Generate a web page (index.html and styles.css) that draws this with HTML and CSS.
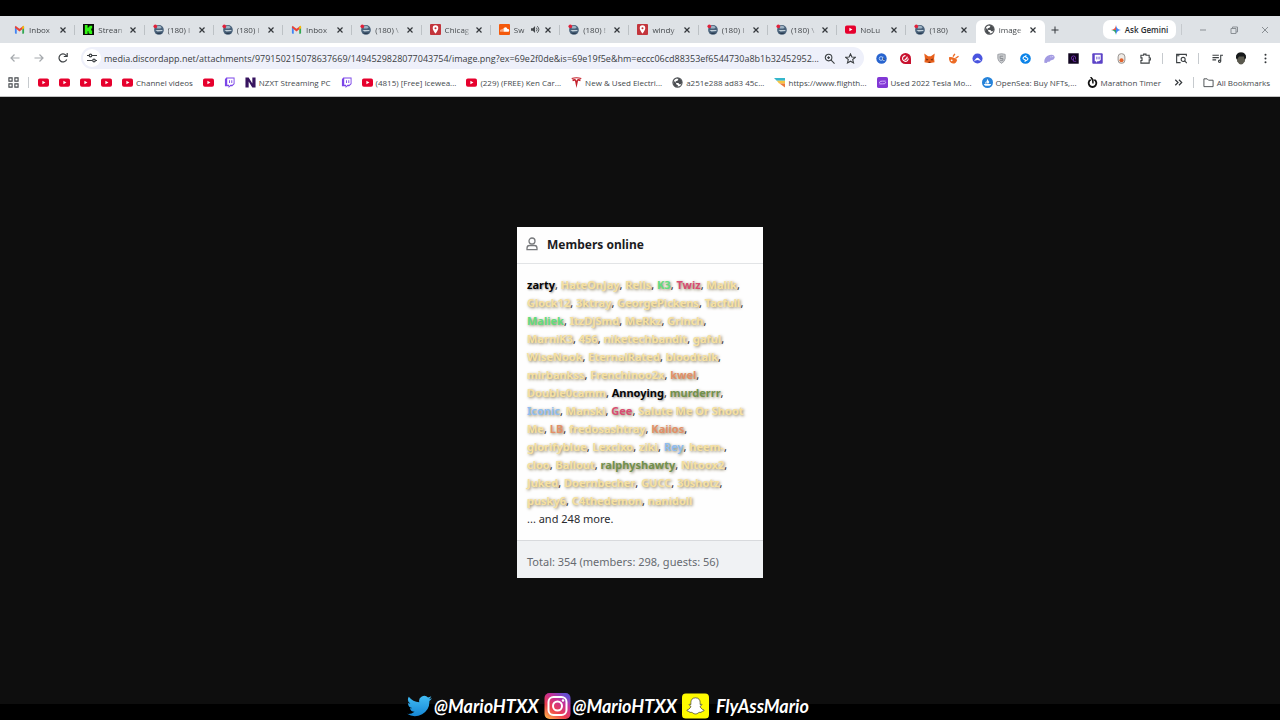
FILE: index.html
```
<!DOCTYPE html>
<html lang="en">
<head>
    <meta charset="UTF-8">
    <meta name="viewport" content="width=device-width, initial-scale=1.0">
    <title>image.png</title>
    <link rel="stylesheet" href="styles.css">
</head>
<body>
    <svg class="sprite" aria-hidden="true">
        <symbol id="gmail" viewBox="0 0 12 12"><path fill="#4285f4" d="M1 3h2v7.500H1.800a.8.8 0 0 1-.8-.8z"/><path fill="#34a853" d="M9 3h2v6.700a.8.8 0 0 1-.8.8H9z"/><path fill="#ea4335" d="M1.500 1.800L6 5.300l4.500-3.500.5 2.400-5 3.900-5-3.900z"/><path fill="#fbbc04" d="M9 3.200l1.200-1.200q.8 0 .8 1v1.500L9 6z"/></symbol>
        <symbol id="kick" viewBox="0 0 12 12"><path fill="#0a0a0a" d="M0 0h12v12H0z"/><path fill="#32f516" d="M2 1h3v3h1V3h1V2h3v3H9v2h1v4H7v-1H6V8H5v3H2z"/></symbol>
        <symbol id="forum" viewBox="0 0 12 12"><circle cx="6.500" cy="6.500" r="5.300" fill="#49617a"/><path fill="#9db3c4" d="M4 2.500q3-1.500 5.500 1L8 5H4z"/><path fill="#c3d0d9" d="M2.500 6.500h8l-.5 1-5 .8z"/><path fill="#27394e" d="M3 9.500h7q-3.500 3-7 0z"/><circle cx="2.500" cy="2.500" r="2" fill="#e0213b"/></symbol>
        <symbol id="pin" viewBox="0 0 12 12"><rect width="12" height="12" rx="1" fill="#c3353c"/><path fill="#fff" fill-rule="evenodd" d="M6 1.500a3 3 0 0 1 3 3.200C9 6.800 6 10.500 6 10.500S3 6.800 3 4.700a3 3 0 0 1 3-3.200zm0 2a1.100 1.100 0 1 0 0 2.200 1.100 1.100 0 0 0 0-2.200z"/></symbol>
        <symbol id="cloud" viewBox="0 0 12 12"><rect width="12" height="12" rx="1" fill="#f4590b"/><path fill="#fff" d="M5.500 8.500V4q3-1.500 3.700 1.500 2-.2 2 1.500t-1.600 1.500zM4.300 4.500h.7v4h-.7zM3 5.500h.7v3H3zM1.700 6.300h.7v2.200h-.7z"/></symbol>
        <symbol id="youtube" viewBox="0 0 12 12"><rect y="1.500" width="12" height="9" rx="2" fill="#e6002d"/><path fill="#fff" d="M4.800 4v4l3.300-2z"/></symbol>
        <symbol id="globe" viewBox="0 0 12 12"><circle cx="6" cy="6" r="5" fill="#fff" stroke="#4b4e52" stroke-width="1.200"/><path fill="#4b4e52" d="M1.500 4l3 2v2l2 1-.5 2Q2 10.500 1.500 7zM5 1.200l2 1-1 2-2 .3v2L7 6.500l1 1.500h2l1-2Q10.500 1.500 6.500 1z"/></symbol>
        <symbol id="twitch" viewBox="0 0 12 12"><path fill="#7b45e8" d="M2.500.5h9v7L9 10H7l-2 2v-2H1V2.500z"/><path fill="#fff" d="M3.500 1.500h7v5.500L9 8.500H7L5.500 10V8.500h-2z"/><path fill="#7b45e8" d="M5.500 3.500h1v3h-1zm2.500 0h1v3H8z"/></symbol>
        <symbol id="nzxt" viewBox="0 0 12 12"><path fill="#36135f" d="M.5.500H4L8 7V.500h3.500v11H8L4 5v6.500H.500z"/></symbol>
        <symbol id="tesla" viewBox="0 0 12 12"><path fill="#c3202b" d="M.5 1Q6-.5 11.500 1L11 2.200Q6 .7 1 2.200zM1.300 2.800Q3 2.100 5 2.400L6 4l1-1.600q2-.3 3.700.4L10 4.500Q8.500 4 7.700 4.200L6 12 4.300 4.200Q3.500 4 2 4.500z"/></symbol>
        <symbol id="flight" viewBox="0 0 12 12"><path fill="#35b6cb" d="M0 1h12v3H3z"/><path fill="#f6c544" d="M3 4h9v3H5.500z"/><path fill="#ec7a3c" d="M6 7h6v4.500z"/></symbol>
        <symbol id="recharge" viewBox="0 0 12 12"><rect width="12" height="12" rx="2" fill="#8238d5"/><path fill="none" stroke="#d9b9ff" d="M2.500 6.500Q3 4 6 4.500h3.500M2.500 7.500H6q3.500.5 3.700-2"/></symbol>
        <symbol id="opensea" viewBox="0 0 12 12"><circle cx="6" cy="6" r="6" fill="#2683da"/><path fill="#fff" d="M5.500 2l2.500 3.500L7 7H5.500zM5 3.500V7H3.200zM2 7.700h8Q9.500 9.500 8 9.500H4Q2.500 9.500 2 7.700z"/></symbol>
        <symbol id="timer" viewBox="0 0 12 12"><path fill="none" stroke="#111" stroke-width="2" d="M4 3a4.200 4.200 0 1 0 4 0"/><path stroke="#111" stroke-width="1.500" d="M4 0l2.500 3v4"/></symbol>
        <symbol id="close" viewBox="0 0 8 8"><path stroke="#33373b" stroke-width="1.200" d="M1.500 1.500l5 5m0-5l-5 5"/></symbol>
    </svg>

    <header class="browser">
        <div class="tabstrip">
            <div class="tabs">
                <div class="tab"><svg class="icon"><use href="#gmail"/></svg><span class="tab-title">Inbox</span><button class="tab-close" aria-label="Close tab"><svg><use href="#close"/></svg></button></div>
                <div class="tab"><svg class="icon"><use href="#kick"/></svg><span class="tab-title">Strean</span><button class="tab-close" aria-label="Close tab"><svg><use href="#close"/></svg></button></div>
                <div class="tab"><svg class="icon"><use href="#forum"/></svg><span class="tab-title">(180) I</span><button class="tab-close" aria-label="Close tab"><svg><use href="#close"/></svg></button></div>
                <div class="tab"><svg class="icon"><use href="#forum"/></svg><span class="tab-title">(180) I</span><button class="tab-close" aria-label="Close tab"><svg><use href="#close"/></svg></button></div>
                <div class="tab"><svg class="icon"><use href="#gmail"/></svg><span class="tab-title">Inbox</span><button class="tab-close" aria-label="Close tab"><svg><use href="#close"/></svg></button></div>
                <div class="tab"><svg class="icon"><use href="#forum"/></svg><span class="tab-title">(180) \</span><button class="tab-close" aria-label="Close tab"><svg><use href="#close"/></svg></button></div>
                <div class="tab"><svg class="icon"><use href="#pin"/></svg><span class="tab-title">Chicag</span><button class="tab-close" aria-label="Close tab"><svg><use href="#close"/></svg></button></div>
                <div class="tab">
                    <svg class="icon"><use href="#cloud"/></svg><span class="tab-title">Sw</span>
                    <svg class="sound" viewBox="0 0 10 10"><path fill="#44484c" d="M0 3.500h2L4.500 1v8L2 6.500H0z"/><path fill="none" stroke="#44484c" d="M6 3q1.500 2 0 4M7 1.300q3.500 3.700 0 7.400"/></svg>
                    <button class="tab-close" aria-label="Close tab"><svg><use href="#close"/></svg></button>
                </div>
                <div class="tab"><svg class="icon"><use href="#forum"/></svg><span class="tab-title">(180) !</span><button class="tab-close" aria-label="Close tab"><svg><use href="#close"/></svg></button></div>
                <div class="tab"><svg class="icon"><use href="#pin"/></svg><span class="tab-title">windy</span><button class="tab-close" aria-label="Close tab"><svg><use href="#close"/></svg></button></div>
                <div class="tab"><svg class="icon"><use href="#forum"/></svg><span class="tab-title">(180) I</span><button class="tab-close" aria-label="Close tab"><svg><use href="#close"/></svg></button></div>
                <div class="tab"><svg class="icon"><use href="#forum"/></svg><span class="tab-title">(180) \</span><button class="tab-close" aria-label="Close tab"><svg><use href="#close"/></svg></button></div>
                <div class="tab"><svg class="icon"><use href="#youtube"/></svg><span class="tab-title">NoLu</span><button class="tab-close" aria-label="Close tab"><svg><use href="#close"/></svg></button></div>
                <div class="tab"><svg class="icon"><use href="#forum"/></svg><span class="tab-title">(180)</span><button class="tab-close" aria-label="Close tab"><svg><use href="#close"/></svg></button></div>
                <div class="tab active"><svg class="icon"><use href="#globe"/></svg><span class="tab-title">image</span><button class="tab-close" aria-label="Close tab"><svg><use href="#close"/></svg></button></div>
            </div>
            <button class="new-tab" aria-label="New tab"><svg viewBox="0 0 8 8"><path stroke="#33373b" d="M4 .5v7M.5 4h7"/></svg></button>
            <button class="gemini">
                <svg viewBox="0 0 10 10"><path fill="#4285f4" d="M5 0q.5 4.500 5 5-4.500.5-5 5z"/><path fill="#34a06a" d="M5 10Q4.500 5.500 0 5h5z"/><path fill="#e5574a" d="M5 0Q4.500 4.500 0 5h5z"/></svg>
                Ask Gemini
            </button>
            <span class="divider"></span>
            <div class="window-buttons">
                <button aria-label="Minimize"><svg viewBox="0 0 8 8"><path d="M1 4h6"/></svg></button>
                <button aria-label="Restore"><svg viewBox="0 0 8 8"><path d="M1 2.500h5v5H1zM2.500 2.500V1H7.500v5H6"/></svg></button>
                <button aria-label="Close"><svg viewBox="0 0 8 8"><path d="M1 1l6 6m0-6L1 7"/></svg></button>
            </div>
        </div>

        <div class="toolbar">
            <button class="tool disabled" aria-label="Back"><svg viewBox="0 0 12 12"><path d="M10.500 6h-8.500m3.500-3.500L2 6l3.500 3.500"/></svg></button>
            <button class="tool disabled" aria-label="Forward"><svg viewBox="0 0 12 12"><path d="M1.500 6H10M6.500 2.500L10 6 6.500 9.500"/></svg></button>
            <button class="tool" aria-label="Reload"><svg viewBox="0 0 12 12"><path d="M9.700 7.500A4 4 0 1 1 9 3.300l1 1M10.200 1v3.500H6.800"/></svg></button>
            <div class="omnibox">
                <button class="site-info" aria-label="Site information"><svg viewBox="0 0 12 12"><path d="M1 3.500h2M6 3.500h5M1 8.500h5M9.500 8.500H11"/><circle cx="4.500" cy="3.500" r="1.300"/><circle cx="8" cy="8.500" r="1.300"/></svg></button>
                <input class="url" type="text" aria-label="Address" value="media.discordapp.net/attachments/979150215078637669/1494529828077043754/image.png?ex=69e2f0de&amp;is=69e19f5e&amp;hm=eccc06cd88353ef6544730a8b1b32452952...">
                <button class="tool small" aria-label="Zoom"><svg viewBox="0 0 12 12"><circle cx="5" cy="5" r="3.600"/><path d="M7.500 7.500L11.500 11.500M3.500 5h3M5 3.500v3"/></svg></button>
                <button class="tool small" aria-label="Bookmark this tab"><svg viewBox="0 0 12 12"><path d="M6 1l1.500 3.400 3.700.3-2.800 2.400.9 3.700L6 8.900l-3.300 1.900.9-3.700L.8 4.700l3.700-.3z"/></svg></button>
            </div>
            <div class="extensions">
                <button class="ext" aria-label="Extension"><svg viewBox="0 0 12 12"><circle cx="6" cy="6" r="5.700" fill="#2864cf"/><circle cx="5.500" cy="6" r="2" fill="none" stroke="#b8d5ff"/><path stroke="#b8d5ff" d="M7.500 4v4h2"/></svg></button>
                <button class="ext" aria-label="Extension"><svg viewBox="0 0 12 12"><path fill="#c8102e" d="M6 0a6 6 0 0 1 6 6v6H6A6 6 0 0 1 6 0z"/><path fill="none" stroke="#fff" stroke-width="1.200" d="M9 6A3.100 3.100 0 1 1 6 2.900M5 7.200Q7.500 7 8 4"/></svg></button>
                <button class="ext" aria-label="Extension"><svg viewBox="0 0 12 12"><path fill="#e8601c" d="M.3.500L4.500 3.500h3L11.700.500 11 6l.5 4-3 .5L7.500 11h-3l-1-.5-3-.5L1 6z"/><path fill="#6f2f17" d="M2 6l3 1-2 1.500zM10 6L7 7l2 1.500zM5 9.500h2v1.500H5z"/></svg></button>
                <button class="ext" aria-label="Extension"><svg viewBox="0 0 12 12"><path fill="#ec6b25" d="M1 4.500Q4 4 7 5.500t3 2Q9 11.500 5.500 11.500 1 11 1 4.500z"/><path stroke="#ec6b25" stroke-width="1.500" d="M5.500 4l2-3M8 6l3.500-2.500"/><circle cx="4" cy="8" r="1" fill="#fff"/></svg></button>
                <button class="ext" aria-label="Extension"><svg viewBox="0 0 12 12"><circle cx="6" cy="6" r="5.500" fill="#4a55df"/><path fill="#fff" d="M1.800 9.200L4.200 6.300q1.800-2 3.600 0l2.400 2.900Q8.500 7.500 6 7.500T1.800 9.200z"/></svg></button>
                <button class="ext" aria-label="Extension"><svg viewBox="0 0 12 12"><path fill="#c9cbce" stroke="#999da2" d="M2 1.500L6 .8l4 .7v4.500Q9.500 9.500 6 11.300 2.500 9.500 2 6z"/><path fill="none" stroke="#85898e" d="M7.800 3.500H4.500V6h3v2h-3"/></svg></button>
                <button class="ext" aria-label="Extension"><svg viewBox="0 0 12 12"><circle cx="6" cy="6" r="5.800" fill="#0b83e8"/><path fill="none" stroke="#fff" stroke-width="1.200" d="M7 2.800L4 4.500q-1.300 1.300 0 2.200L6.200 8M5 9.200l3-1.700q1.300-1.300 0-2.200L5.800 4"/></svg></button>
                <button class="ext" aria-label="Extension"><svg viewBox="0 0 12 12"><path fill="#a39be2" d="M.3 10.500Q0 4 6 2.300q5.500-1.300 5.700 3-.7 2.700-4.200 2.500L6 9.500H4l-1 1.500z"/><path stroke="#eeeaff" d="M7.500 3.800v1M9.500 3.500v1"/></svg></button>
                <button class="ext" aria-label="Extension"><svg viewBox="0 0 12 12"><path fill="#10051f" d="M.3.300h11.400v11.400H.300z"/><circle cx="6" cy="5.500" r="2.300" fill="none" stroke="#7132af"/><path stroke="#7132af" d="M6 5v4h3"/></svg></button>
                <button class="ext" aria-label="Extension"><svg viewBox="0 0 12 12"><rect x=".3" y=".3" width="11.400" height="11.400" rx="1" fill="#5b42c7"/><path fill="#fff" d="M3 2h6.500v5.500L7.500 9H6l-1.500 1.500V9H3z"/><path stroke="#5b42c7" d="M5.300 4v3M7.700 4v3"/></svg></button>
                <button class="ext" aria-label="Extension"><svg viewBox="0 0 12 12"><rect x="2.300" y=".7" width="7.400" height="10.600" rx="3.500" fill="#eeeae5" stroke="#8e8985"/><circle cx="6" cy="7.800" r="2.200" fill="#e2622c"/></svg></button>
                <button class="ext" aria-label="Extensions"><svg class="line" viewBox="0 0 12 12"><path d="M1 2.500h3V1.200h2.500v1.300h3.500V5.500h1.300v2H10v3.500H1V8.200h1.200V5.300H1z"/></svg></button>
                <span class="divider"></span>
                <button class="ext" aria-label="Tab search"><svg class="line" viewBox="0 0 12 12"><path d="M5 10.500H.7V1.500h10.600v2M.7 3h3"/><circle cx="7.800" cy="7" r="2.200"/><path d="M9.500 8.700l2.300 2.300"/></svg></button>
                <span class="divider"></span>
                <button class="ext" aria-label="Media controls"><svg class="line" viewBox="0 0 12 12"><path d="M.5 2.500h7M.5 5h7M.5 7.500h4M9.500 9V2.500H12"/><circle cx="8.300" cy="9" r="1.200"/></svg></button>
                <button class="ext" aria-label="Profile"><svg class="avatar" viewBox="0 0 12 12"><path fill="#5a594e" d="M1.500 5q0-5 4.500-5t4.500 5l-.7 4Q8 12 6 12T2.200 9z"/><path fill="#16191b" d="M1 5.500Q.5 0 6 0t5 5.500L9.500 7 9 4H4L2 7z"/></svg></button>
                <button class="ext" aria-label="Menu"><svg viewBox="0 0 12 12"><circle cx="6" cy="2" r="1.100" fill="#33373b"/><circle cx="6" cy="6" r="1.100" fill="#33373b"/><circle cx="6" cy="10" r="1.100" fill="#33373b"/></svg></button>
            </div>
        </div>

        <nav class="bookmarks">
            <button class="apps" aria-label="Apps"><svg viewBox="0 0 12 12"><path fill="none" stroke="#44484c" stroke-width="1.200" d="M1 1h3.500v3.500H1zM7.500 1H11v3.500H7.500zM1 7.500h3.500V11H1zM7.500 7.500H11V11H7.500z"/></svg></button>
            <span class="divider"></span>
            <div class="bookmark-list">
                <a class="bookmark" href="#" aria-label="YouTube"><svg><use href="#youtube"/></svg></a>
                <a class="bookmark" href="#" aria-label="YouTube"><svg><use href="#youtube"/></svg></a>
                <a class="bookmark" href="#" aria-label="YouTube"><svg><use href="#youtube"/></svg></a>
                <a class="bookmark" href="#" aria-label="YouTube"><svg><use href="#youtube"/></svg></a>
                <a class="bookmark" href="#"><svg><use href="#youtube"/></svg>Channel videos</a>
                <a class="bookmark" href="#" aria-label="YouTube"><svg><use href="#youtube"/></svg></a>
                <a class="bookmark" href="#" aria-label="Twitch"><svg><use href="#twitch"/></svg></a>
                <a class="bookmark" href="#"><svg><use href="#nzxt"/></svg>NZXT Streaming PC</a>
                <a class="bookmark" href="#" aria-label="Twitch"><svg><use href="#twitch"/></svg></a>
                <a class="bookmark" href="#"><svg><use href="#youtube"/></svg>(4815) [Free] Icewea...</a>
                <a class="bookmark" href="#"><svg><use href="#youtube"/></svg>(229) (FREE) Ken Car...</a>
                <a class="bookmark" href="#"><svg><use href="#tesla"/></svg>New &amp; Used Electri...</a>
                <a class="bookmark" href="#"><svg><use href="#globe"/></svg>a251e288 ad83 45c...</a>
                <a class="bookmark" href="#"><svg><use href="#flight"/></svg>https://www.flighth...</a>
                <a class="bookmark" href="#"><svg><use href="#recharge"/></svg>Used 2022 Tesla Mo...</a>
                <a class="bookmark" href="#"><svg><use href="#opensea"/></svg>OpenSea: Buy NFTs,...</a>
                <a class="bookmark" href="#"><svg><use href="#timer"/></svg>Marathon Timer</a>
            </div>
            <button class="more" aria-label="More bookmarks"><svg viewBox="0 0 12 12"><path fill="none" stroke="#33373b" stroke-width="1.300" d="M2.500 3l3 3-3 3M6.500 3l3 3-3 3"/></svg></button>
            <span class="divider"></span>
            <a class="bookmark" href="#"><svg viewBox="0 0 12 12"><path fill="none" stroke="#44484c" d="M1 2h3.500L6 3.500h5v7H1z"/></svg>All Bookmarks</a>
        </nav>
    </header>

    <main class="viewer">
        <section class="card">
            <h1 class="card-header">
                <svg viewBox="0 0 12 14"><circle cx="6" cy="4" r="3"/><path d="M1 12.700v-1.500Q1 8.500 3.500 8.500h5Q11 8.500 11 11.200v1.500z"/></svg>
                Members online
            </h1>
            <div class="members">
                <a class="staff" href="#">zarty</a>, <a href="#">HateOnJay</a>, <a href="#">Rells</a>, <a class="green" href="#">K3</a>, <a class="red" href="#">Twiz</a>, <a href="#">Malik</a>,<br>
                <a href="#">Glock12</a>, <a href="#">3ktray</a>, <a href="#">GeorgePickens</a>, <a href="#">Tacfull</a>,<br>
                <a class="green" href="#">Maliek</a>, <a href="#">ItzDjSmd</a>, <a href="#">MeRkz</a>, <a href="#">Grinch</a>,<br>
                <a href="#">MarniK3</a>, <a href="#">456</a>, <a href="#">niketechbandit</a>, <a href="#">gaful</a>,<br>
                <a href="#">WiseNook</a>, <a href="#">EternalRated</a>, <a href="#">bloodtalk</a>,<br>
                <a href="#">mirbankss</a>, <a href="#">Frenchinoo2x</a>, <a class="orange" href="#">kwel</a>,<br>
                <a href="#">Double0camm</a>, <a class="staff" href="#">Annoying</a>, <a class="olive" href="#">murderrr</a>,<br>
                <a class="blue" href="#">Iconic</a>, <a href="#">Manski</a>, <a class="red" href="#">Gee</a>, <a href="#">Salute Me Or Shoot<br>Me</a>, <a class="orange" href="#">LB</a>, <a href="#">fredosashtray</a>, <a class="orange" href="#">Kaiios</a>,<br>
                <a href="#">glorifyblue</a>, <a href="#">Lexcixo</a>, <a href="#">ziki</a>, <a class="blue" href="#">Rey</a>, <a href="#">heem-</a>,<br>
                <a href="#">cloo</a>, <a href="#">Ballout</a>, <a class="olive" href="#">ralphyshawty</a>, <a href="#">Nitoox2</a>,<br>
                <a href="#">Juked</a>, <a href="#">Doernbecher</a>, <a href="#">GUCC</a>, <a href="#">30shotz</a>,<br>
                <a href="#">pusky6</a>, <a href="#">C4thedemon</a>, <a href="#">nanidoll</a><br>
                ... and 248 more.
            </div>
            <div class="card-footer">Total: 354 (members: 298, guests: 56)</div>
        </section>
    </main>

    <footer class="socials">
        <span class="social">
            <svg class="twitter" viewBox="0 0 24 24"><defs><linearGradient id="tw" x2="0" y2="1"><stop stop-color="#41bcf5"/><stop offset="1" stop-color="#1687d5"/></linearGradient></defs><path fill="url(#tw)" d="M24 4.600a10 10 0 0 1-2.800.8 5 5 0 0 0 2.100-2.700 10 10 0 0 1-3.100 1.200 4.900 4.900 0 0 0-8.400 4.500A14 14 0 0 1 1.700 3.200a4.900 4.900 0 0 0 1.500 6.500 4.900 4.900 0 0 1-2.200-.6 4.900 4.900 0 0 0 3.900 4.900 5 5 0 0 1-2.200.1 4.900 4.900 0 0 0 4.600 3.400A9.900 9.900 0 0 1 0 19.500 14 14 0 0 0 21.500 7.100 10 10 0 0 0 24 4.600z"/></svg>
            @MarioHTXX
        </span>
        <span class="social">
            <svg viewBox="0 0 26 26"><defs><linearGradient id="ig" x1="0" y1="1" x2=".7" y2="0"><stop stop-color="#ffc24a"/><stop offset=".4" stop-color="#ed3f4d"/><stop offset=".75" stop-color="#c42f99"/><stop offset="1" stop-color="#674dd0"/></linearGradient></defs><rect width="26" height="26" rx="5" fill="url(#ig)"/><g fill="none" stroke="#fff" stroke-width="2"><rect x="4" y="4" width="18" height="18" rx="5"/><circle cx="13" cy="13" r="4.500"/></g><circle cx="18.500" cy="7.500" r="1.200" fill="#fff"/></svg>
            @MarioHTXX
        </span>
        <span class="social snap">
            <svg viewBox="0 0 28 26"><rect width="28" height="26" rx="4" fill="#fffb00"/><path fill="#fff" stroke="#4a4a30" stroke-width=".8" d="M14 4.500c3.500 0 5 2.500 4.800 5v2l1.700-.3c.6.600-.2 1.200-1.500 1.800-.7.500 1 3.500 4 4.300 0 1-1.500 1.200-2.500 1.400l-.5 1c-2-.4-2.700 0-3.500.8-1.600 1-3.400 1-5 0-.8-.8-1.500-1.200-3.500-.8l-.5-1c-1-.2-2.500-.4-2.500-1.400 3-.8 4.700-3.800 4-4.300-1.300-.6-2.100-1.200-1.500-1.800l1.700.3v-2c-.2-2.500 1.300-5 4.800-5z"/></svg>
            FlyAssMario
        </span>
    </footer>
</body>
</html>
```
FILE: styles.css
```
* {
    box-sizing: border-box;
}
body {
    display: flex;
    flex-direction: column;
    min-height: 100vh;
    margin: 0;
    padding: 16px 0;
    background-color: #000;
    color: #44484c;
    font-family: 'Open Sans', 'Noto Sans', sans-serif;
    font-size: 8px;
}
button {
    display: flex;
    align-items: center;
    justify-content: center;
    padding: 0;
    border: none;
    background: none;
    color: inherit;
    font: inherit;
}
a {
    color: inherit;
    text-decoration: none;
}
svg {
    display: block;
    flex: none;
}
.sprite {
    position: absolute;
    width: 0;
    height: 0;
}
.divider {
    flex: none;
    width: 1px;
    height: 11px;
    background-color: #c6cace;
}

/* Tabs */
.browser {
    background-color: #fff;
    border-bottom: 1px solid #c4c4c4;
}
.tabstrip {
    display: flex;
    align-items: center;
    height: 27px;
    padding-left: 6px;
    background-color: #dee2e6;
}
.tabs {
    display: flex;
    flex: 1;
    min-width: 0;
    align-self: stretch;
}
.tab {
    display: flex;
    flex: 1;
    align-items: center;
    gap: 4px;
    min-width: 0;
    margin: 4px 0 0;
    padding: 0 8px 4px;
    background: linear-gradient(#bcc1c5, #bcc1c5) right 5px / 1px 10px no-repeat;
}
.tab.active {
    background: #fff;
    border-radius: 6px 6px 0 0;
}
.tab:nth-last-child(2) {
    background: none;
}
.icon {
    width: 11px;
    height: 11px;
}
.tab-title {
    flex: 1;
    min-width: 0;
    overflow: hidden;
    white-space: nowrap;
    -webkit-mask-image: linear-gradient(to right, #000 70%, transparent);
    mask-image: linear-gradient(to right, #000 70%, transparent);
}
.sound {
    width: 9px;
    height: 9px;
}
.tab-close {
    width: 8px;
}
.tab-close svg,
.new-tab svg {
    width: 8px;
    height: 8px;
}
.new-tab {
    width: 20px;
}
.gemini {
    gap: 4px;
    width: 73px;
    height: 19px;
    margin: 0 5px 0 38px;
    border-radius: 7px;
    background-color: #fff;
    color: #2b2e31;
    font-weight: 600;
}
.gemini svg {
    width: 10px;
    height: 10px;
}
.window-buttons {
    display: flex;
    margin-left: 5px;
}
.window-buttons button {
    width: 31px;
}
.window-buttons svg {
    width: 8px;
    height: 8px;
    fill: none;
    stroke: #8a8f94;
}

/* Address row */
.toolbar {
    display: flex;
    align-items: center;
    height: 30px;
    padding: 0 3px;
}
.tool {
    width: 24px;
    height: 22px;
}
.tool svg,
.site-info svg,
.line {
    width: 12px;
    height: 12px;
    fill: none;
    stroke: #3c4043;
    stroke-width: 1.2;
}
.tool.disabled svg {
    stroke: #a5a9ad;
}
.omnibox {
    display: flex;
    flex: 1;
    align-items: center;
    height: 22px;
    margin: 0 5px 0 6px;
    padding: 0 8px 0 2px;
    border-radius: 11px;
    background-color: #eef0fa;
}
.site-info {
    width: 18px;
    height: 18px;
    border-radius: 9px;
    background-color: #fff;
}
.url {
    flex: 1;
    min-width: 0;
    margin-left: 3px;
    padding: 0;
    border: none;
    background: none;
    color: #3a3d42;
    font: 9px 'Open Sans', 'Noto Sans', sans-serif;
}
.tool.small {
    justify-content: flex-end;
    width: 18px;
}
.tool.small:last-child {
    width: 21px;
}
.tool.small:nth-last-child(2) {
    width: 12px;
}
.tool.small svg {
    width: 11px;
    height: 11px;
}
.extensions {
    display: flex;
    align-items: center;
}
.ext {
    width: 24px;
    height: 22px;
}
.ext svg {
    width: 11px;
    height: 11px;
}
.ext .avatar {
    width: 12px;
    height: 13px;
}
.extensions .divider {
    margin: 0 6px 0 5px;
}

/* Bookmarks row */
.bookmarks {
    display: flex;
    align-items: center;
    gap: 9px;
    height: 23px;
    padding: 0 10px 5px 8px;
    white-space: nowrap;
}
.bookmark-list {
    display: flex;
    flex: 1;
    gap: 10px;
}
.bookmark {
    display: flex;
    align-items: center;
    gap: 3px;
}
.bookmark svg,
.apps svg,
.more svg {
    width: 11px;
    height: 11px;
}

/* Page */
.viewer {
    display: flex;
    flex: 1;
    align-items: center;
    justify-content: center;
    padding-top: 4px;
    background-color: #0e0e0e;
}
.card {
    width: 246px;
    background-color: #fefefe;
    color: #2a2b2e;
    font-family: 'Noto Sans', 'Open Sans', sans-serif;
    font-size: 11px;
}
.card-header {
    display: flex;
    align-items: center;
    gap: 9px;
    height: 37px;
    margin: 0;
    padding: 0 9px 2px;
    border-bottom: 1px solid #e2e4e6;
    color: #1c1c1e;
    font-size: 12px;
    font-weight: 700;
}
.card-header svg {
    width: 12px;
    height: 14px;
    fill: none;
    stroke: #77797c;
    stroke-width: 1.3;
}
.members {
    padding: 12px 10px;
    line-height: 18px;
    white-space: nowrap;
}
.members a {
    color: #f6e0a0;
    font-weight: 700;
    text-shadow: 1px 1px 3px #857a58;
}
.members .staff {
    color: #050505;
    text-shadow: 1px 1px 2px #999;
}
.members .green {
    color: #62dc7c;
}
.members .red {
    color: #d84c72;
}
.members .orange {
    color: #e39068;
}
.members .olive {
    color: #71904c;
}
.members .blue {
    color: #8fbdf0;
}
.card-footer {
    height: 38px;
    padding: 4px 10px 0;
    border-top: 1px solid #d8dadd;
    background-color: #f0f2f4;
    color: #666a70;
    line-height: 34px;
}

/* Stream overlay, drawn over the bottom edge of the page */
.socials {
    position: absolute;
    right: 0;
    bottom: 0;
    left: 0;
    display: flex;
    align-items: center;
    justify-content: center;
    gap: 5px;
    height: 28px;
    padding-right: 64px;
    color: #fff;
    font: italic 700 18px Lato, sans-serif;
}
.social {
    display: flex;
    align-items: center;
    gap: 2px;
}
.social svg {
    width: 27px;
    height: 26px;
}
.social .twitter {
    width: 25px;
}
.snap {
    gap: 7px;
}
```
